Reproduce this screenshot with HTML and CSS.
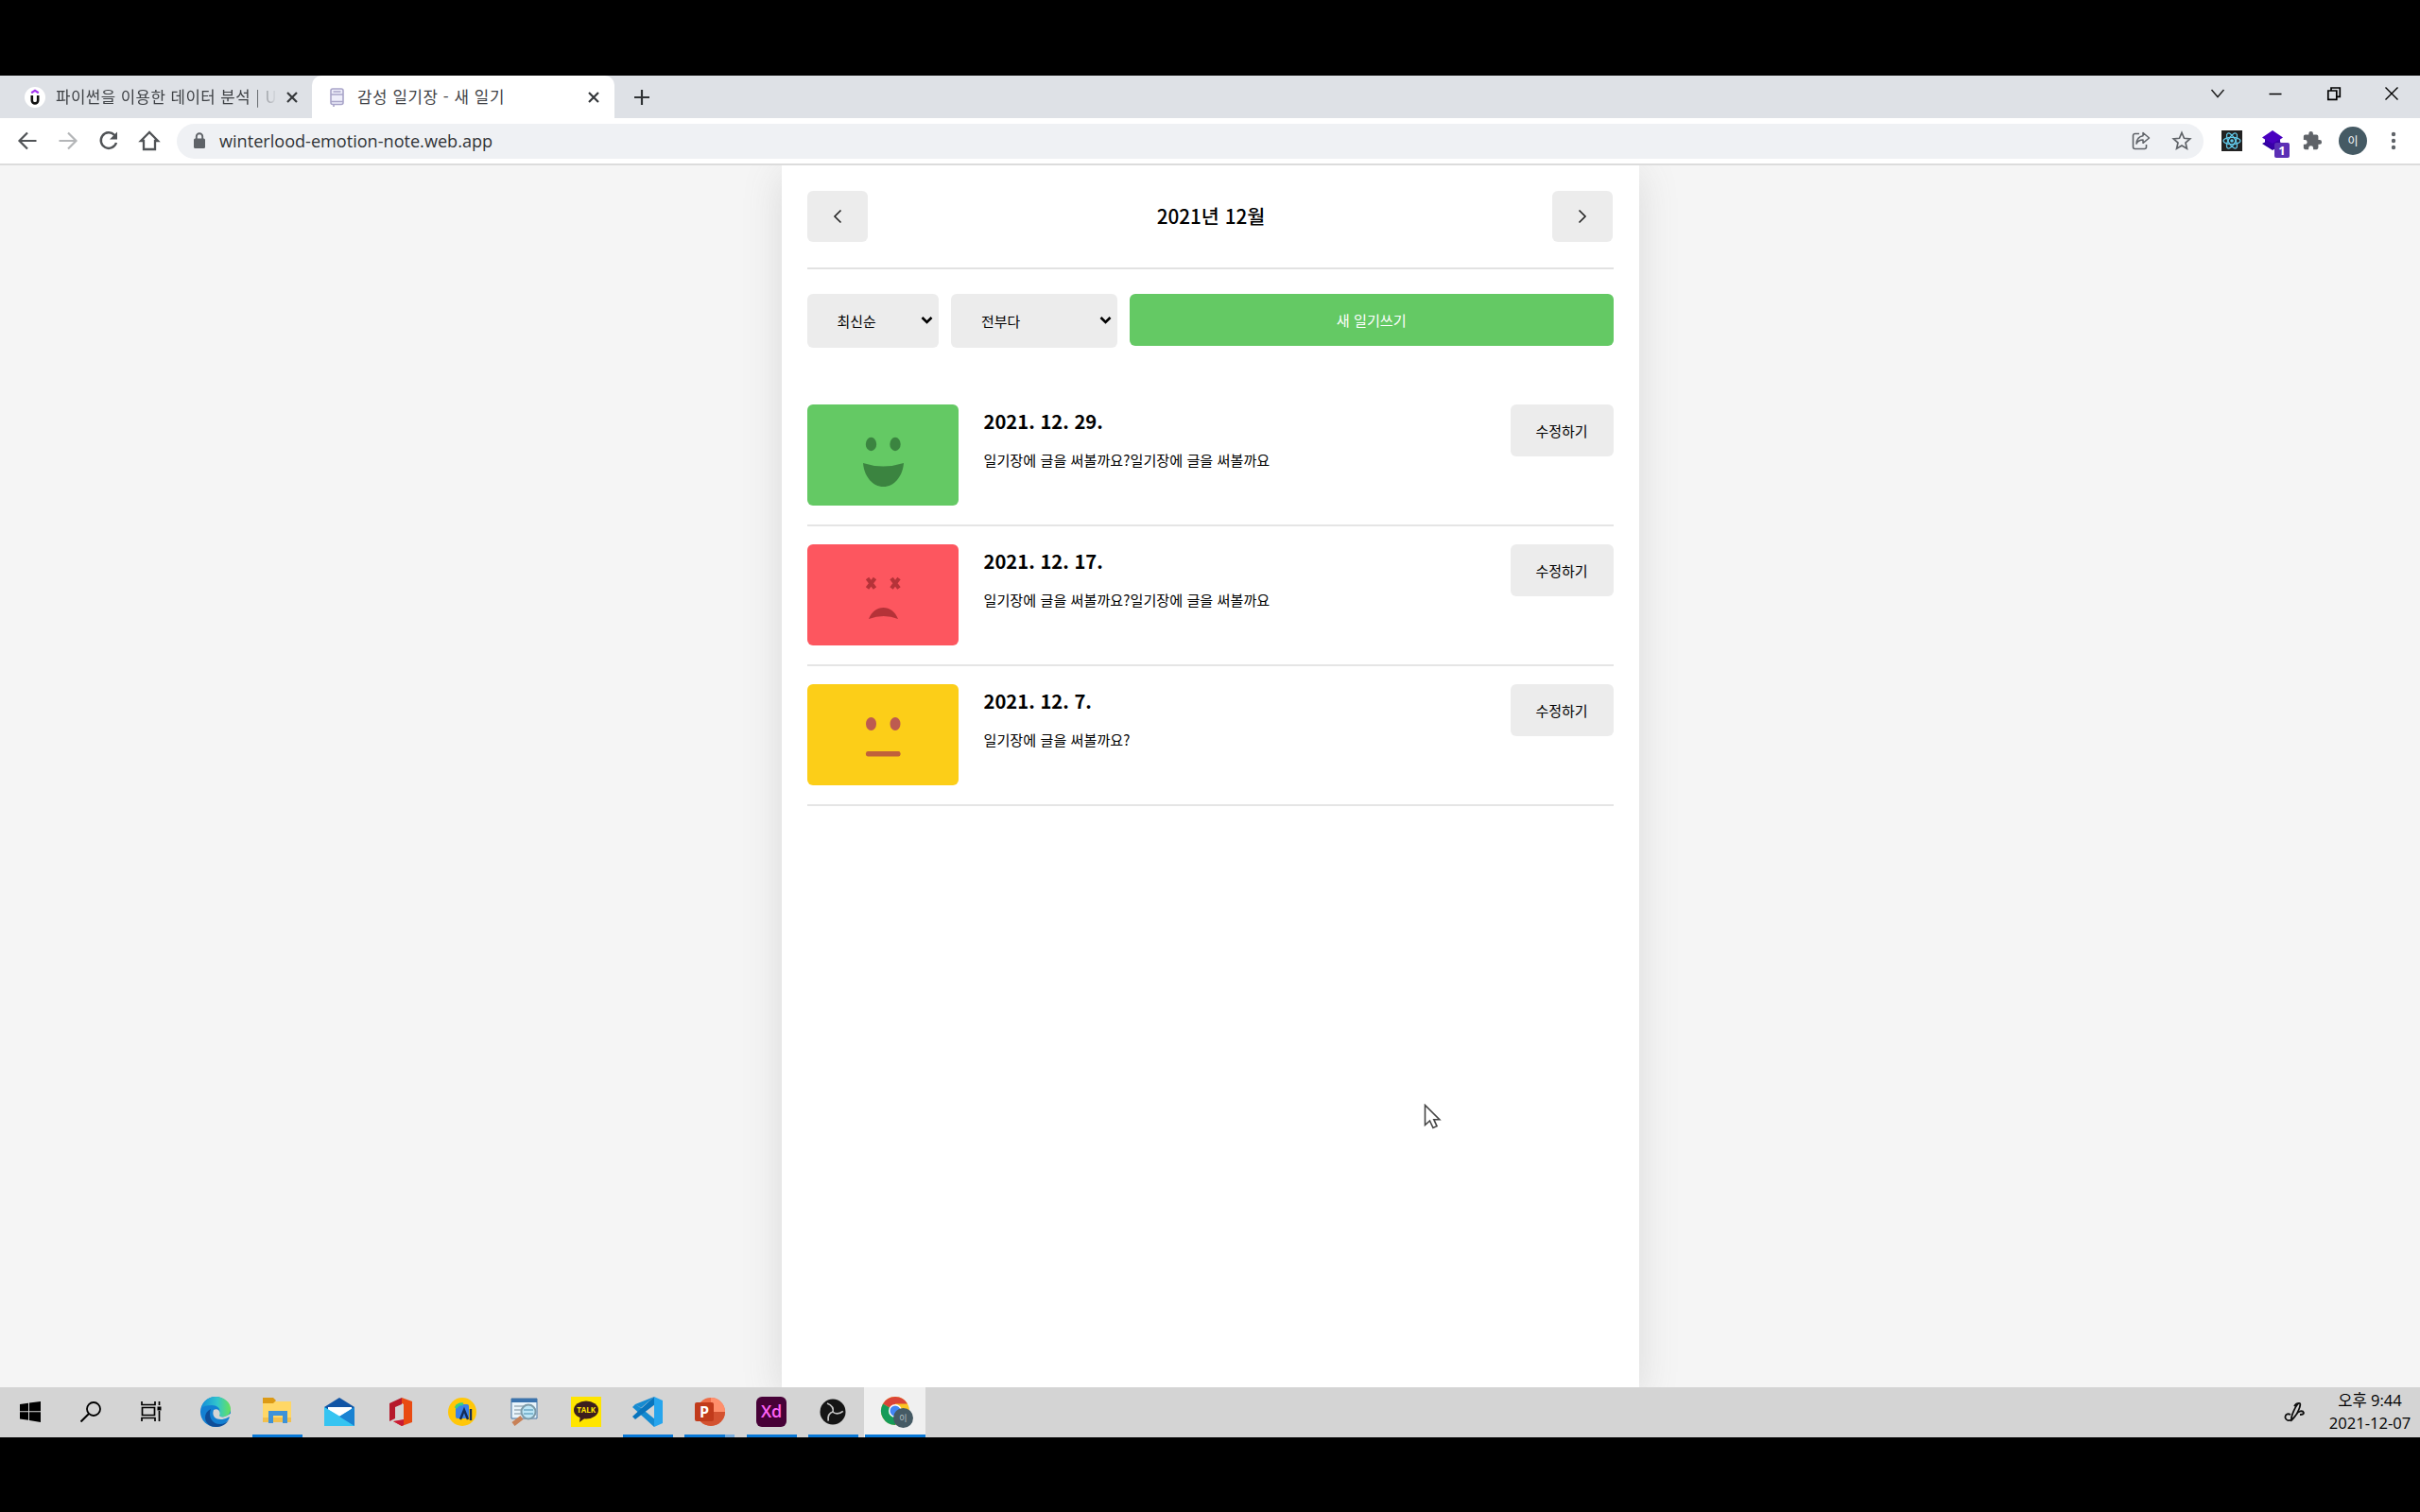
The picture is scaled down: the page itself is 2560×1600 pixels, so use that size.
FILE: index.html
```html
<!DOCTYPE html>
<html lang="ko">
<head>
<meta charset="utf-8">
<title>감성 일기장 - 새 일기</title>
<link rel="stylesheet" href="styles.css">
</head>
<body>
<div class="screen">
  <header class="tabs">
    <div class="tab">
      <svg class="fav" width="22" height="22" viewBox="0 0 22 22"><circle cx="11" cy="11" r="11" fill="#fff"/><path d="M7.2 6.2 11 3.8l3.8 2.4" fill="none" stroke="#a435f0" stroke-width="2.2"/><path d="M7.8 9v5.2a3.2 3.2 0 0 0 6.4 0V9" fill="none" stroke="#111" stroke-width="2.6"/></svg>
      <span class="tab-title faded">파이썬을 이용한 데이터 분석 | U</span>
      <svg class="close" width="12" height="12" viewBox="0 0 12 12"><path d="M1 1l10 10M11 1 1 11" stroke="#35383b" stroke-width="2.2"/></svg>
    </div>
    <div class="tab active">
      <svg class="fav" width="22" height="22" viewBox="0 0 22 22"><rect x="5" y="2" width="13" height="16.500" rx="2" fill="#eeeefa" stroke="#a9a5c9" stroke-width="1.600"/><path d="M5 8h13M7.500 5h8M5 15.500h13M8 18v3" fill="none" stroke="#a9a5c9" stroke-width="1.600"/></svg>
      <span class="tab-title">감성 일기장 - 새 일기</span>
      <svg class="close" width="12" height="12" viewBox="0 0 12 12"><path d="M1 1l10 10M11 1 1 11" stroke="#35383b" stroke-width="2.2"/></svg>
    </div>
    <svg class="plus" width="18" height="18" viewBox="0 0 18 18"><path d="M9 1v16M1 9h16" stroke="#303336" stroke-width="2.200"/></svg>
    <div class="window-controls">
      <svg width="16" height="16" viewBox="0 0 16 16"><path d="M1.500 4 8 11.500 14.500 4" fill="none" stroke="#222" stroke-width="1.500"/></svg>
      <svg width="16" height="16" viewBox="0 0 16 16"><path d="M1.500 8.500h13" stroke="#000" stroke-width="1.500"/></svg>
      <svg width="16" height="16" viewBox="0 0 16 16"><path d="M1.800 5h9v9.300h-9zM5 5V2h9.300v9.300h-3" fill="none" stroke="#000" stroke-width="1.700"/></svg>
      <svg width="16" height="16" viewBox="0 0 16 16"><path d="m1.500 1.500 13 13m0-13-13 13" stroke="#000" stroke-width="1.400"/></svg>
    </div>
  </header>

  <div class="toolbar">
    <div class="nav">
      <svg width="24" height="24" viewBox="0 0 24 24"><path d="M21.500 12H4M12 3.500 3.500 12l8.500 8.500" fill="none" stroke="#505356" stroke-width="2.200"/></svg>
      <svg width="24" height="24" viewBox="0 0 24 24"><path d="M2.500 12H20M12 3.500 20.500 12 12 20.500" fill="none" stroke="#b4b6b8" stroke-width="2.200"/></svg>
      <svg width="24" height="24" viewBox="0 0 24 24"><path d="M20 14a8.300 8.300 0 1 1-2-8.200L20 8" fill="none" stroke="#505356" stroke-width="2.400"/><path d="M21 2.500v8h-8z" fill="#505356"/></svg>
      <svg width="24" height="24" viewBox="0 0 24 24"><path d="M12 3 3 12h3v9h12v-9h3z" fill="none" stroke="#505356" stroke-width="2.300"/></svg>
    </div>
    <div class="omnibox">
      <svg class="lock" width="14" height="18" viewBox="0 0 14 18"><rect x="1" y="6.500" width="12" height="10.500" rx="1.500" fill="#5f6368"/><path d="M3.800 7V4.500a3.200 3.200 0 0 1 6.400 0V7" fill="none" stroke="#5f6368" stroke-width="1.900"/></svg>
      <span class="url">winterlood-emotion-note.web.app</span>
      <svg class="share" width="22" height="22" viewBox="0 0 22 22"><path d="M9 3.500H4.500a2 2 0 0 0-2 2v12a2 2 0 0 0 2 2h10a2 2 0 0 0 2-2V15" fill="none" stroke="#5f6368" stroke-width="1.600"/><path d="M13 2.500 19.500 8 13 13.300v-3.200c-3.500 0-5.500 1.200-7 4 .3-4.500 2.500-7.700 7-8.400z" fill="none" stroke="#5f6368" stroke-width="1.500" stroke-linejoin="round"/></svg>
      <svg class="star" width="22" height="22" viewBox="0 0 22 22"><path d="m11 2.500 2.500 5.800 6.200.6-4.700 4.100 1.400 6.200-5.400-3.300-5.400 3.300L7 13 2.300 8.900l6.200-.6z" fill="none" stroke="#5f6368" stroke-width="1.700"/></svg>
    </div>
    <div class="extensions">
      <svg class="react" width="22" height="22" viewBox="0 0 22 22"><path d="M0 0h22v22H0z" fill="#222"/><g fill="none" stroke="#61c8e8" stroke-width="1.300"><ellipse cx="11" cy="11" rx="9" ry="3.700"/><ellipse cx="11" cy="11" rx="9" ry="3.700" transform="rotate(60 11 11)"/><ellipse cx="11" cy="11" rx="9" ry="3.700" transform="rotate(120 11 11)"/></g><circle cx="11" cy="11" r="1.800" fill="#61c8e8"/></svg>
      <div class="stack"><svg width="22" height="22" viewBox="0 0 22 22"><path d="m0 14 11-6 11 6-11 7z" fill="#2c009c"/><path d="M11 0 22 7.500 11 15 0 7.500z" fill="#4a00c0"/><path d="M3 9v5l8 5.500 8-5.500V9l-8 5z" fill="#3900a9"/></svg><span class="badge">1</span></div>
      <svg class="puzzle" width="22" height="22" viewBox="0 0 24 24"><path d="M20.500 11H19V7a2 2 0 0 0-2-2h-4V3.500a2.500 2.500 0 0 0-5 0V5H4a2 2 0 0 0-2 2v3.800h1.500a2.700 2.700 0 0 1 0 5.400H2V20c0 1.100.9 2 2 2h3.800v-1.500a2.700 2.700 0 0 1 5.400 0V22H17a2 2 0 0 0 2-2v-4h1.500a2.500 2.500 0 0 0 0-5z" fill="#5f6368"/></svg>
      <span class="avatar">이</span>
      <svg class="dots" width="6" height="20" viewBox="0 0 6 20"><g fill="#5f6368"><circle cx="3" cy="3" r="2.200"/><circle cx="3" cy="10" r="2.200"/><circle cx="3" cy="17" r="2.200"/></g></svg>
    </div>
  </div>

  <main class="viewport">
    <div class="app">
      <div class="month">
        <div class="button arrow"><svg width="16" height="20" viewBox="0 0 16 20"><path d="M11.500 3.500 5 10l6.500 6.500" fill="none" stroke="#222" stroke-width="1.600"/></svg></div>
        <h1 class="month-title">2021년 12월</h1>
        <div class="button arrow"><svg width="16" height="20" viewBox="0 0 16 20"><path d="M4.500 3.500 11 10l-6.500 6.500" fill="none" stroke="#222" stroke-width="1.600"/></svg></div>
      </div>
      <div class="controls">
        <div class="select order"><span>최신순</span><svg width="13" height="10" viewBox="0 0 13 10"><path d="m1.500 2 5 5 5-5" fill="none" stroke="#000" stroke-width="2.600"/></svg></div>
        <div class="select filter"><span>전부다</span><svg width="13" height="10" viewBox="0 0 13 10"><path d="m1.500 2 5 5 5-5" fill="none" stroke="#000" stroke-width="2.600"/></svg></div>
        <div class="button create">새 일기쓰기</div>
      </div>
      <div class="diaries">
        <article class="diary">
          <div class="mood good"><svg width="160" height="107" viewBox="0 0 160 107"><g fill="#3b8440"><ellipse cx="67.500" cy="42" rx="5.700" ry="7.200"/><ellipse cx="93" cy="42" rx="5.700" ry="7.200"/><path d="M59 62q21 7 43 0c-1 14-10 25-21.500 25S60 76 59 62z"/></g></svg></div>
          <div class="info"><h2 class="date">2021. 12. 29.</h2><p class="text">일기장에 글을 써볼까요?일기장에 글을 써볼까요</p></div>
          <div class="button edit">수정하기</div>
        </article>
        <article class="diary">
          <div class="mood bad"><svg width="160" height="107" viewBox="0 0 160 107"><path d="m63.500 36 8 10.500m0-10.500-8 10.500m25.500-10.500 8 10.500m0-10.500-8 10.500" stroke="#b53238" stroke-width="4.200"/><path d="M65 79c3-8 9-12 15.500-12S93 71 96 79q-15-6-31 0z" fill="#b53238"/></svg></div>
          <div class="info"><h2 class="date">2021. 12. 17.</h2><p class="text">일기장에 글을 써볼까요?일기장에 글을 써볼까요</p></div>
          <div class="button edit">수정하기</div>
        </article>
        <article class="diary">
          <div class="mood soso"><svg width="160" height="107" viewBox="0 0 160 107"><g fill="#bd5b50"><ellipse cx="67.500" cy="42" rx="5.500" ry="7"/><ellipse cx="93" cy="42" rx="5.500" ry="7"/></g><rect x="62" y="71" width="36.500" height="5.500" rx="2.200" fill="#c0613b"/></svg></div>
          <div class="info"><h2 class="date">2021. 12. 7.</h2><p class="text">일기장에 글을 써볼까요?</p></div>
          <div class="button edit">수정하기</div>
        </article>
      </div>
    </div>
  </main>

  <footer class="taskbar">
    <div class="system">
      <div class="slot"><svg width="22" height="22" viewBox="0 0 22 22"><path d="m0 3 9-1.300v8.500H0zm10-1.400L22 0v10.200H10zM0 11.300h9v8.500L0 18.600zm10 0h12V22l-12-1.900z"/></svg></div>
      <div class="slot"><svg width="22" height="22" viewBox="0 0 22 22"><circle cx="14" cy="8" r="7" fill="none" stroke="#000" stroke-width="1.800"/><path d="m9 13-8.500 8.500" stroke="#000" stroke-width="2"/></svg></div>
      <div class="slot"><svg width="22" height="22" viewBox="0 0 22 22"><path d="M1 0v3.500h14V0M1 21v-3.500h14V21M1.500 6.500h13v8h-13zM19.500 0v4m0 6v11" fill="none" stroke="#000" stroke-width="1.700"/><path d="M17.500 5.500h4v4h-4z"/></svg></div>
    </div>
    <div class="programs">
      <div class="slot"><svg width="32" height="32" viewBox="0 0 32 32"><defs><linearGradient id="edge-top" x1="0" x2="1"><stop stop-color="#138fd9"/><stop offset=".55" stop-color="#32c5cc"/><stop offset="1" stop-color="#66e25a"/></linearGradient></defs><circle cx="16" cy="16" r="16" fill="#1380d2"/><path d="M1 12C3 4 9 0 16 0c9 0 16 6 16 13 0 6-5 9-10 8-3-.6-3-2-2-4 2-5-3-8-8-8-5 0-9 1-11 3z" fill="url(#edge-top)"/><path d="M11 13c-3 8 1 16 10 16 4 0 7-2 9-4-3 4-7 7-13 7C9 32 5 27 5 22c0-4 2-7 6-9z" fill="#0e4d98"/><path d="M14 14c-3 8 5 13 15 8 2-1 3 0 2 2l2 4V17l-3 2c-4 3-9 3-10 1 2-5-2-8-6-6z" fill="#d5d5d5"/></svg></div>
      <div class="slot running"><svg width="32" height="32" viewBox="0 0 32 32"><path d="M1 5h30v20H1z" fill="#ffd766"/><path d="M1 1h11l3 3-3 3H1z" fill="#dc9a16"/><path d="M1 22h30v5H1z" fill="#f2c04c"/><path d="M7 28V15h20v13h-5v-8H12v8z" fill="#3d92d8"/></svg></div>
      <div class="slot"><svg width="32" height="32" viewBox="0 0 32 32"><path d="M0 11 16 1l16 10v4H0z" fill="#1155a5"/><path d="M4 11h25v10H4z" fill="#fff"/><path d="M0 11v20h32V11L16 21z" fill="#27b1ed"/><path d="m0 11 32 19v1H0z" fill="#36c4f1"/><path d="m16 21 16-10v20z" fill="#1982d2"/></svg></div>
      <div class="slot"><svg width="32" height="32" viewBox="0 0 32 32"><path d="M4 7 17 1v7l-7 3v12l-6 3z" fill="#b6192c"/><path d="m17 1 11 4v22l-11 4-9-5 11-1V8l-2-1z" fill="#e94b12"/><path d="m8 26 11-2v6l-2 1z" fill="#c91b35"/></svg></div>
      <div class="slot"><svg width="32" height="32" viewBox="0 0 32 32"><circle cx="16" cy="16" r="15" fill="#ffc709"/><rect x="9" y="8" width="14" height="15" rx="2" fill="#3b81e8"/><path d="M9 12q3-5 8-4" fill="none" stroke="#35d184" stroke-width="3"/><path d="m14 24 4-10 4 10m3-11v12" fill="none" stroke="#142c58" stroke-width="2.400"/></svg></div>
      <div class="slot"><svg width="32" height="32" viewBox="0 0 32 32"><path d="M2 2h27v21H2z" fill="#e9f4fb" stroke="#4474a4"/><path d="M2 2h27v4H2z" fill="#3b73ad"/><path d="M5 10h11m-11 4h9m-9 4h7" stroke="#9dafba" stroke-width="1.500"/><path d="m4 29 9-7" stroke="#c88157" stroke-width="5"/><circle cx="20" cy="16" r="7.500" fill="#bde6f6" stroke="#7c9ba9" stroke-width="2"/><path d="M15 14h10m-10 4h10" stroke="#6ca9c5" stroke-width="1.500"/></svg></div>
      <div class="slot"><div class="talk"><svg width="26" height="24" viewBox="0 0 26 24"><ellipse cx="13" cy="10" rx="13" ry="9.500" fill="#3c1e1e"/><path d="m7 15-1 8 8-6z" fill="#3c1e1e"/></svg><span class="talk-label">TALK</span></div></div>
      <div class="slot running"><svg width="32" height="32" viewBox="0 0 32 32"><path d="M23 0 9 12 3 8 0 11l23 21 1-8L8 11 3 8z" fill="#168bd1"/><path d="m23 0 1 8L3 24l-3-3z" fill="#0874bd"/><path d="m23 0 9 4v24l-9 4z" fill="#27a5ed"/></svg></div>
      <div class="slot running multiple"><svg width="32" height="32" viewBox="0 0 32 32"><circle cx="17" cy="16" r="15" fill="#ed6c47"/><path d="M17 1a15 15 0 0 1 15 15H17z" fill="#ff8f6b"/><path d="M2 16h30a15 15 0 0 1-30 0z" fill="#d35230"/><rect x="0" y="6" width="20" height="20" rx="2" fill="#c13b1b"/><text x="10" y="22" class="ppt-letter">P</text></svg></div>
      <div class="slot running"><span class="xd">Xd</span></div>
      <div class="slot running"><svg width="28" height="28" viewBox="0 0 28 28"><circle cx="14" cy="14" r="13.500" fill="#151515"/><g fill="none" stroke="#c4c4c4" stroke-width="1.700"><path id="blade" d="M14 14.500c1-4-1-7.500-6-9.500"/><use href="#blade" transform="rotate(120 14 14)"/><use href="#blade" transform="rotate(240 14 14)"/></g></svg></div>
      <div class="slot running current"><svg class="chrome" width="36" height="36" viewBox="0 0 36 36"><circle cx="16" cy="17" r="15" fill="#fac423"/><path d="M16 17 3 9.500A15 15 0 0 1 29 9.500H16z" fill="#db4437"/><path d="M3 9.500A15 15 0 0 0 16 32l6-11-6-4z" fill="#159b58"/><circle cx="16" cy="17" r="7" fill="#fff"/><circle cx="16" cy="17" r="5.500" fill="#4285f4"/><circle cx="24.500" cy="24.500" r="10.500" fill="#455a64"/><text x="24.500" y="28" class="profile-letter">이</text></svg></div>
    </div>
    <svg class="pen" width="24" height="24" viewBox="0 0 24 24"><path d="M9 21c-1-4 5-17 8-18 4-1-2 13-8 18zm3-15c2-3 4-3 5-3M8 15c-5-3-8 4-3 6 4 1 7-3 9-6 2-4 7-5 8-2 0 2-2 2-4 2" fill="none" stroke="#111" stroke-width="1.800"/></svg>
    <div class="clock"><span class="time">오후 9:44</span><span class="today">2021-12-07</span></div>
  </footer>
</div>
<svg class="cursor" width="20" height="28" viewBox="0 0 20 28"><path d="M1.500 1.500v21l5-4.500 3.500 7.500 4-1.800-3.200-7h6z" fill="#fff" stroke="#444" stroke-width="1.600"/></svg>
</body>
</html>
```

FILE: styles.css
```css
* { box-sizing: border-box; }
body { margin: 0; background: #000; font-family: "Noto Sans CJK KR", sans-serif; color: #000; }
svg { display: block; flex: none; }
.screen { width: 2560px; height: 1600px; padding: 80px 0 79px; display: flex; flex-direction: column; overflow: hidden; }

.tabs { height: 45px; flex: none; display: flex; align-items: center; background: #dee1e6; }
.tab { height: 45px; display: flex; align-items: center; width: 330px; padding: 0 15px 0 26px; }
.tab .close { margin-left: auto; }
.tab.active { width: 320px; padding: 0 16px 0 15px; background: #fff; border-radius: 10px 10px 0 0; }
.tab-title { margin-left: 11px; padding-bottom: 2px; font-size: 16.8px; letter-spacing: .6px; line-height: 24px; color: #3f4246; white-space: nowrap; }
.tab-title.faded { width: 238px; letter-spacing: .45px; mask-image: linear-gradient(to right, #000 205px, transparent 234px); }
.plus { margin-left: 20px; }
.window-controls { margin-left: auto; display: flex; gap: 45.3px; padding: 0 22px 7px 0; }

.toolbar { height: 50px; flex: none; display: flex; align-items: center; background: #fff; border-bottom: 2px solid #dcdcdc; position: relative; z-index: 1; }
.nav { display: flex; gap: 19px; padding-left: 17px; width: 187px; flex: none; }
.omnibox { width: 2144px; height: 37px; border-radius: 19px; background: #eff1f4; display: flex; align-items: center; padding: 0 12px 0 17px; }
.url { margin-left: 14px; font: 18.1px/24px "Open Sans", sans-serif; color: #303336; }
.share { margin-left: auto; }
.star { margin-left: 21px; }
.extensions { display: flex; align-items: center; padding-left: 19px; }
.stack { position: relative; margin-left: 21px; }
.badge { position: absolute; left: 13px; top: 13px; width: 16px; height: 16px; border-radius: 2px; background: #5b2fb5; color: #fff; font: bold 13px/16px "Open Sans", sans-serif; text-align: center; }
.puzzle { margin-left: 20px; }
.avatar { margin-left: 17px; width: 30px; height: 30px; border-radius: 50%; background: #455a64; color: #fff; font-size: 12px; line-height: 29px; text-align: center; }
.dots { margin-left: 25px; }

.viewport { flex: 1; min-height: 0; background: #f5f5f5; display: flex; justify-content: center; }
.app { width: 907px; padding: 0 27px; background: #fff; box-shadow: 0 9px 39px rgba(100, 100, 100, .18); }
.month { height: 109.5px; border-bottom: 2px solid #e2e2e2; display: flex; align-items: center; justify-content: space-between; }
.month-title { margin: 0; padding: 0 0 2px 2px; font-size: 20.7px; font-weight: 500; line-height: 32px; }
.button { background: #ececec; border-radius: 6px; height: 54.5px; display: flex; align-items: center; justify-content: center; font-size: 15px; }
.arrow { width: 64px; }
.controls { display: flex; align-items: flex-start; padding-top: 26px; }
.select { height: 57px; margin-right: 13.5px; border-radius: 6px; background: #ececec; display: flex; align-items: center; justify-content: space-between; padding: 0 6px 0 32px; font-size: 14.9px; }
.order { width: 139px; }
.filter { width: 176px; margin-right: 13px; }
.create { flex: 1; background: #64c964; color: #fff; height: 55px; padding-bottom: 1px; font-size: 15.2px; }
.diaries { padding-top: 41.5px; }
.diary { height: 148px; padding: 19px 0; border-bottom: 2px solid #e5e5e5; display: flex; align-items: flex-start; }
.mood { width: 160px; height: 107px; border-radius: 6px; overflow: hidden; }
.good { background: #64c964; }
.bad { background: #fd565f; }
.soso { background: #fcce18; }
.info { flex: 1; padding-left: 27px; }
.date { margin: 3px 0 0; font-size: 20.2px; line-height: 30px; font-weight: 700; }
.text { margin: 13px 0 0; font-size: 15.15px; line-height: 24px; }
.edit { width: 109px; }

.taskbar { height: 53.5px; flex: none; display: flex; align-items: center; background: #d4d4d4; position: relative; z-index: 1; }
.system, .programs { display: flex; height: 100%; }
.programs { margin-left: 3.5px; }
.slot { width: 64px; height: 100%; display: flex; align-items: center; justify-content: center; }
.programs .slot { width: 65.33px; }
.running { background: linear-gradient(#0878d7, #0878d7) center bottom / 53px 3px no-repeat; }
.multiple { background: linear-gradient(to right, #0878d7 43px, #76ade0 43px) center bottom / 53px 3px no-repeat; }
.current { background: linear-gradient(#0878d7, #0878d7) center bottom / 64px 3px no-repeat, #f0f0f0; }
.chrome { margin-left: 4px; }
.talk { position: relative; width: 32px; height: 32px; padding: 4px 3px; background: #ffe500; }
.talk-label { position: absolute; left: 0; top: 8px; width: 32px; text-align: center; font: bold 8px/12px "Open Sans", sans-serif; color: #ffe500; }
.xd { width: 32px; height: 32px; border-radius: 6px; background: #470137; color: #ff61f6; font: 600 18px/31px "Open Sans", sans-serif; text-align: center; }
.ppt-letter { font: bold 16px "Open Sans", sans-serif; fill: #fff; text-anchor: middle; }
.profile-letter { font-size: 9px; fill: #b7c1c6; text-anchor: middle; }
.pen { margin-left: auto; }
.clock { width: 104px; margin-left: 17px; padding-right: 2px; display: flex; flex-direction: column; align-items: center; font: 16.6px/24px "Open Sans", "Noto Sans CJK KR", sans-serif; }
.cursor { position: absolute; left: 1506px; top: 1168px; }
```
